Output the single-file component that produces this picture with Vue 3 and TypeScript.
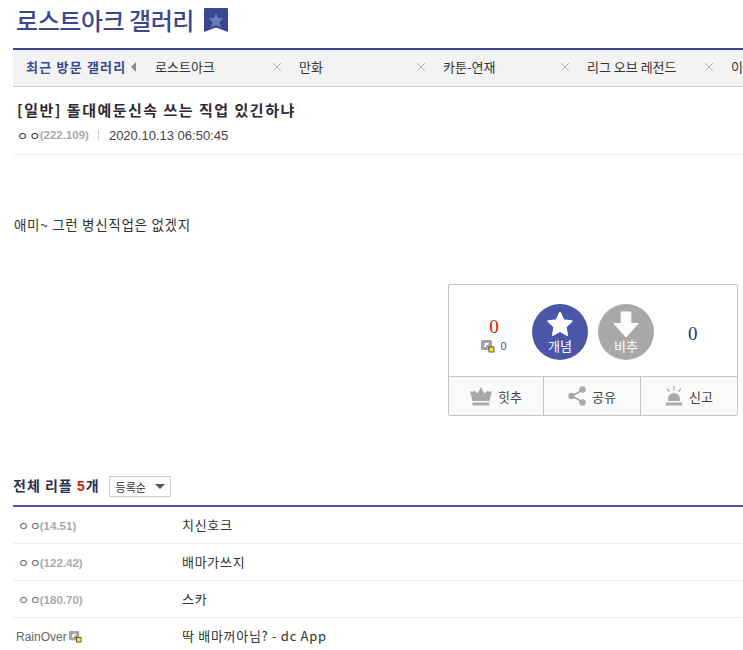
<template>
  <div class="page">
    <h1 class="gall-title">
      <span>로스트아크 갤러리</span>
      <svg class="bookmark" viewBox="0 0 24 24" width="24" height="24">
        <path d="M1 0H23a1 1 0 0 1 1 1V24L12 19.5 0 24V1a1 1 0 0 1 1-1Z" fill="#3b4890" />
        <path d="M12 5l2.300 4.900 5.300.6-3.900 3.600 1 5.300-4.700-2.600-4.700 2.600 1-5.300-3.900-3.600 5.300-.6Z" fill="#6d79bd" />
      </svg>
    </h1>

    <div class="recent">
      <strong class="recent-label">최근 방문 갤러리</strong>
      <i class="recent-arrow"></i>
      <div class="tabs">
        <div v-for="tab in tabs" :key="tab" class="tab">
          <span class="tab-name">{{ tab }}</span>
          <svg class="tab-close" viewBox="0 0 10 10" width="10" height="10">
            <path d="M1 1l8 8M9 1l-8 8" stroke="#b4b4b4" fill="none" />
          </svg>
        </div>
      </div>
    </div>

    <header class="post-head">
      <h2 class="post-title">[일반] 돌대예둔신속 쓰는 직업 있긴하냐</h2>
      <div class="post-meta">
        <span class="nick">ㅇ ㅇ</span><span class="ip">(222.109)</span>
        <i class="meta-sep"></i>
        <span class="date">2020.10.13 06:50:45</span>
      </div>
    </header>

    <p class="post-body">애미~ 그런 병신직업은 없겠지</p>

    <div class="vote-wrap">
      <div class="vote">
        <div class="vote-top">
          <div class="count-up">
            <b class="num-red">0</b>
            <div class="fix-count">
              <svg class="fix-icon" viewBox="0 0 14 14" width="14" height="14">
                <rect x="0" y="1" width="11" height="10" rx="1.500" fill="#a3a3a3" />
                <path d="M3 8l1-4h4L7 6H5.500L5 8Z" fill="#fff" />
                <rect x="8" y="8" width="5" height="5" fill="#ffe81a" stroke="#333" stroke-width=".8" />
              </svg>
              <span>0</span>
            </div>
          </div>
          <button class="circle circle-up" type="button">
            <svg viewBox="0 0 28 28" width="28" height="27">
              <path d="M14 1.500l3.700 7.900 8.600 1.100-6.300 6 1.600 8.600-7.600-4.200-7.600 4.200 1.600-8.600-6.300-6 8.600-1.100Z" fill="#fff" stroke="#fff" stroke-width="1.600" stroke-linejoin="round" />
            </svg>
            <span>개념</span>
          </button>
          <button class="circle circle-down" type="button">
            <svg viewBox="0 0 28 28" width="28" height="27">
              <path d="M9 1H19V13H26.500L14 27 1.500 13H9Z" fill="#fff" stroke="#fff" stroke-linejoin="round" />
            </svg>
            <span>비추</span>
          </button>
          <b class="num-blue">0</b>
        </div>
        <div class="vote-bottom">
          <button class="vote-btn" type="button">
            <svg viewBox="0 0 22 20" width="22" height="20">
              <path d="M11 1l3.500 6.500L18 4.500l1 1.500 3-1-2.500 10H2.500L0 5l3 1 1-1.500 3.500 3Z" fill="#a9a9a9" />
              <rect x="2.500" y="16.500" width="17" height="3" fill="#a9a9a9" />
            </svg>
            <span>힛추</span>
          </button>
          <button class="vote-btn" type="button">
            <svg viewBox="0 0 18 20" width="18" height="20">
              <path d="M14.500 4L4 10l10.500 6" fill="none" stroke="#a9a9a9" stroke-width="1.800" />
              <circle cx="14.500" cy="3.500" r="3.200" fill="#a9a9a9" />
              <circle cx="3.500" cy="10" r="3.200" fill="#a9a9a9" />
              <circle cx="14.500" cy="16.500" r="3.200" fill="#a9a9a9" />
            </svg>
            <span>공유</span>
          </button>
          <button class="vote-btn" type="button">
            <svg viewBox="0 0 18 20" width="18" height="20">
              <path d="M3 15v-2a6 6 0 0 1 12 0v2Z" fill="#a9a9a9" />
              <rect x="1" y="16.500" width="16" height="3" fill="#a9a9a9" />
              <path d="M9 0v4.500M2 2.500l2.500 3M16 2.500l-2.500 3" stroke="#a9a9a9" stroke-width="1.200" fill="none" />
            </svg>
            <span>신고</span>
          </button>
        </div>
      </div>
    </div>

    <section class="replies">
      <div class="reply-head">
        <strong class="reply-count">전체 리플 <em>5</em>개</strong>
        <div class="sort">
          <span>등록순</span>
          <i class="sort-arrow"></i>
        </div>
      </div>
      <ul class="reply-list">
        <li v-for="reply in replies" :key="reply.text" class="reply">
          <div class="reply-name">
            <span class="reply-nick" :class="{ 'is-member': !reply.ip }">{{ reply.nick }}</span>
            <span v-if="reply.ip" class="reply-ip">({{ reply.ip }})</span>
            <svg v-else class="fix-icon" viewBox="0 0 14 14" width="13" height="13">
              <rect x="0" y="1" width="11" height="10" rx="1.500" fill="#a3a3a3" />
              <path d="M3 8l1-4h4L7 6H5.500L5 8Z" fill="#fff" />
              <rect x="8" y="8" width="5" height="5" fill="#ffe81a" stroke="#333" stroke-width=".8" />
            </svg>
          </div>
          <div class="reply-text">{{ reply.text }}</div>
        </li>
      </ul>
    </section>
  </div>
</template>

<script setup lang="ts">
interface Reply {
  nick: string
  ip?: string
  text: string
}

const tabs: string[] = ['로스트아크', '만화', '카툰-연재', '리그 오브 레전드', '이']

const replies: Reply[] = [
  { nick: 'ㅇ ㅇ', ip: '14.51', text: '치신호크' },
  { nick: 'ㅇ ㅇ', ip: '122.42', text: '배마가쓰지' },
  { nick: 'ㅇ ㅇ', ip: '180.70', text: '스카' },
  { nick: 'RainOver', text: '딱 배마꺼아님? - dc App' }
]
</script>

<style>
html,
body {
  margin: 0;
  overflow: hidden;
  background: #fff;
}
</style>

<style scoped>
.page {
  width: 730px;
  height: 650px;
  margin-left: 13px;
  overflow: hidden;
  font-family: "Noto Sans CJK KR", "Liberation Sans", sans-serif;
  color: #333;
}

/* 타이틀 */
.gall-title {
  display: flex;
  align-items: center;
  gap: 10px;
  height: 39px;
  margin: 0;
  padding: 0 0 9px 3px;
  font-size: 24px;
  line-height: 39px;
  font-weight: 500;
  color: #3b4890;
  letter-spacing: -0.45px;
}

.bookmark {
  flex: none;
  margin-top: 1px;
}

/* 최근 방문 */
.recent {
  display: flex;
  align-items: center;
  height: 33px;
  padding: 0 0 3px 13px;
  background: #f3f3f3;
  border-top: 2px solid #3b4890;
  border-bottom: 1px solid #cecece;
  white-space: nowrap;
}

.recent-label {
  flex: none;
  width: 100px;
  font-size: 13px;
  font-weight: 700;
  letter-spacing: 1.2px;
  color: #3b4890;
}

.recent-arrow {
  flex: none;
  width: 0;
  height: 0;
  margin-left: 5px;
  border-style: solid;
  border-width: 5px 5px 5px 0;
  border-color: transparent #8c8c8c transparent transparent;
}

.tabs {
  display: flex;
  margin-left: 19px;
}

.tab {
  flex: none;
  display: flex;
  align-items: center;
  width: 144px;
}

.tab-name {
  flex: 1;
  font-size: 13px;
  color: #333;
}

.tab-close {
  flex: none;
  margin-right: 17px;
}

/* 글 헤더 */
.post-head {
  height: 68px;
  padding-left: 4px;
  border-bottom: 1px solid #eee;
  box-sizing: border-box;
}

.post-title {
  margin: 0;
  padding-top: 12px;
  font-size: 15px;
  line-height: 22px;
  font-weight: 700;
  letter-spacing: 1.5px;
  color: #2f2a33;
}

.post-meta {
  display: flex;
  align-items: center;
  height: 20px;
  margin-top: 4px;
  font-size: 12px;
}

.nick {
  letter-spacing: -0.7px;
  color: #333;
}

.ip {
  font-family: "Liberation Sans", sans-serif;
  font-size: 11.5px;
  font-weight: 700;
  color: #a9a9a9;
}

.meta-sep {
  width: 1px;
  height: 10px;
  margin: 0 10px 0 9px;
  background: #d0d0d0;
}

.date {
  font-family: "Liberation Sans", sans-serif;
  font-size: 13px;
  color: #444;
}

/* 본문 */
.post-body {
  margin: 0;
  padding: 58px 0 0 1px;
  font-size: 13.5px;
  line-height: 22px;
  letter-spacing: 0.7px;
  color: #333;
}

/* 개념글 추천 */
.vote-wrap {
  display: flex;
  justify-content: flex-end;
  padding: 49px 5px 0 0;
}

.vote {
  width: 290px;
  height: 132px;
  box-sizing: border-box;
  border: 1px solid #c4c4c4;
  border-radius: 2px;
}

.vote-top {
  display: flex;
  align-items: center;
  height: 91px;
}

.count-up {
  flex: none;
  width: 83px;
  padding-left: 7px;
  box-sizing: border-box;
  margin-top: 8px;
  text-align: center;
}

.num-red,
.num-blue {
  font-family: "Liberation Serif", serif;
  font-weight: 400;
  font-size: 19px;
}

.num-red {
  display: block;
  line-height: 22px;
  margin-bottom: 1px;
  color: #d31900;
}

.num-blue {
  margin: 7px 0 0 24px;
  color: #29367c;
}

.fix-count {
  display: flex;
  align-items: center;
  justify-content: center;
  gap: 5px;
  font-family: "Liberation Sans", sans-serif;
  font-size: 11px;
  color: #3b4890;
}

.fix-icon {
  flex: none;
}

.circle {
  flex: none;
  display: flex;
  flex-direction: column;
  align-items: center;
  width: 56px;
  height: 56px;
  padding: 7px 0 0;
  margin: 3px 10px 0 0;
  box-sizing: border-box;
  border: 0;
  border-radius: 50%;
  font-family: inherit;
  font-size: 13px;
  line-height: 14px;
  color: #fff;
}

.circle svg {
  flex: none;
  margin-bottom: 1px;
}

.circle-up {
  background: #4a57a8;
}

.circle-down {
  background: #a9a9a9;
}

.vote-bottom {
  display: flex;
  height: 38px;
  border-top: 1px solid #c4c4c4;
  background-color: #fafafa;
  background-image: radial-gradient(#f0f0f0 0.6px, transparent 0.6px);
  background-size: 4px 4px;
}

.vote-btn {
  flex: 1;
  display: flex;
  align-items: center;
  justify-content: center;
  gap: 6px;
  padding: 0;
  border: 0;
  border-right: 1px solid #c4c4c4;
  background: transparent;
  font-family: inherit;
  font-size: 13px;
  color: #444;
}

.vote-btn:first-child {
  flex: none;
  width: 95px;
}

.vote-btn:last-child {
  border-right: 0;
}

/* 리플 */
.replies {
  padding-top: 60px;
}

.reply-head {
  display: flex;
  align-items: center;
  gap: 9px;
  height: 21px;
  padding-bottom: 8px;
  border-bottom: 2px solid #4a57a8;
}

.reply-count {
  padding-bottom: 4px;
  font-size: 14px;
  font-weight: 700;
  letter-spacing: 1px;
  color: #29304f;
}

.reply-count em {
  font-family: "Liberation Sans", sans-serif;
  font-style: normal;
  color: #d31900;
}

.sort {
  display: flex;
  align-items: center;
  justify-content: space-between;
  width: 62px;
  height: 21px;
  padding: 0 5px 0 6px;
  box-sizing: border-box;
  border: 1px solid #cecece;
  font-size: 11px;
  color: #333;
}

.sort-arrow {
  width: 0;
  height: 0;
  border-style: solid;
  border-width: 5px 5px 0;
  border-color: #555 transparent transparent;
}

.reply-list {
  margin: 0;
  padding: 0;
  list-style: none;
}

.reply {
  display: flex;
  align-items: center;
  height: 37px;
  box-sizing: border-box;
  border-bottom: 1px solid #eee;
}

.reply-name {
  display: flex;
  align-items: center;
  width: 169px;
  flex: none;
  padding: 1px 0 0 5px;
  box-sizing: border-box;
  font-size: 12px;
  color: #666;
}

.reply-nick {
  letter-spacing: -1px;
}

.reply-nick.is-member {
  margin-left: -2px;
  margin-right: 2px;
  font-family: "Liberation Sans", sans-serif;
  letter-spacing: 0;
  color: #666;
}

.reply-ip {
  font-family: "Liberation Sans", sans-serif;
  font-size: 11.5px;
  font-weight: 700;
  color: #a9a9a9;
}

.reply-text {
  padding-bottom: 2px;
  font-size: 13px;
  letter-spacing: 0.7px;
  color: #333;
}
</style>
